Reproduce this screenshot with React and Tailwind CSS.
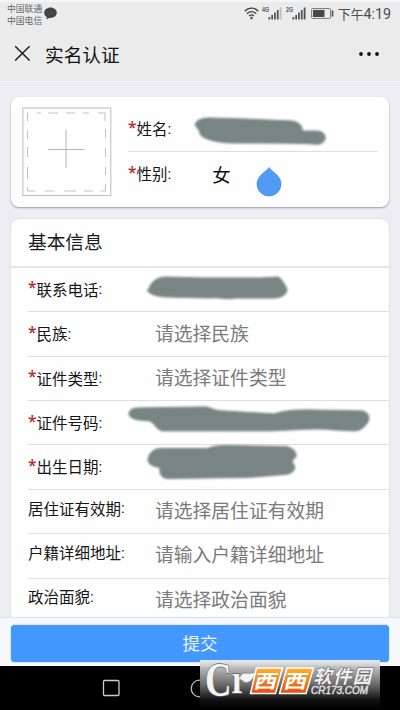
import React from "react";

const BASIC_FIELDS = [
  {
    label: "联系电话",
    required: true,
    strokes: "M149 289 C151 281 158 277 166 277 L202 278 L260 278 L278 277 C282 279 286 286 287 290 C287 295 280 298 274 298 L235 298 C228 300 220 297 210 298 L168 297 C157 297 149 294 147 290 Z",
  },
  { label: "民族", required: true, placeholder: "请选择民族" },
  { label: "证件类型", required: true, placeholder: "请选择证件类型" },
  {
    label: "证件号码",
    required: true,
    strokes: "M129 414 C129 409 134 408 140 408 L206 407 C212 408 215 411 222 411 L274 414 C286 410 298 410 310 410 L362 411 C369 412 370 418 368 422 C364 428 360 431 354 431 L334 430 C318 428 296 430 270 431 L162 431 C157 430 155 424 150 421 L138 420 C133 419 129 417 129 414 Z",
  },
  {
    label: "出生日期",
    required: true,
    strokes: "M148 460 C149 453 154 449 161 449 L208 449 C214 446 220 446 228 446 L286 447 C292 448 297 452 296 457 C294 460 291 461 293 464 C298 469 292 475 284 475 C270 476 255 478 240 478 L168 479 C162 479 159 475 160 468 C153 467 148 465 148 460 Z",
  },
  { label: "居住证有效期", placeholder: "请选择居住证有效期" },
  { label: "户籍详细地址", placeholder: "请输入户籍详细地址" },
  { label: "政治面貌", placeholder: "请选择政治面貌" },
];

function Scribble({ d, top, left }) {
  // path coordinates are in screen units, top/left is the row's own origin
  return (
    <svg
      className="pointer-events-none absolute top-0 left-0 h-[44px] w-[360px] overflow-visible blur-[1px]"
      viewBox={`${left} ${top} 360 44`}
    >
      <path d={d} fill="#788583" stroke="#788583" strokeWidth="1" />
    </svg>
  );
}

function Label({ text, required }) {
  return (
    <span className="flex items-center font-['Noto_Sans_CJK_SC',sans-serif] text-[15.5px] leading-none whitespace-nowrap text-[#151515]">
      {required && (
        <span className="w-[8.5px] pb-[3px] font-['Open_Sans'] text-[15.5px] font-semibold leading-none text-[#b5292b]">
          *
        </span>
      )}
      {text}
      <span className="pt-[1px] font-['Roboto']">:</span>
    </span>
  );
}

function Signal({ name, faded }) {
  return (
    <svg className="h-[14px] w-[20px]" viewBox="0 0 20 14">
      <text x="0" y="6" fontSize="6.5" fontWeight="700" fontFamily="Liberation Sans" fill="#555" textLength="7" lengthAdjust="spacingAndGlyphs">
        {name}
      </text>
      <g fill="#505050">
        <rect x="6.5" y="11" width="1.7" height="2.5" />
        <rect x="9.3" y="9" width="1.7" height="4.5" />
        <rect x="12.1" y="6.5" width="1.7" height="7" />
        <rect x="14.9" y="4" width="1.7" height="9.5" />
        <rect x="17.7" y="1.5" width="1.8" height="12" fill={faded ? "#bdbdbd" : "#505050"} />
      </g>
    </svg>
  );
}

function StatusBar() {
  return (
    <div className="flex h-[28px] items-start pl-[7px] text-[#666]">
      <div className="pt-[1px] text-[8.8px] leading-[12px]">
        <div>中国联通</div>
        <div>中国电信</div>
      </div>
      <svg className="mt-[5px] ml-[2px] h-[13px] w-[13px]" viewBox="0 0 13 13">
        <path d="M6.5 .5C3 .5.2 2.8.2 5.8c0 1.8 1 3.3 2.5 4.2L2.5 12.5 5 10.9c.5.1 1 .1 1.5.1 3.5 0 6.3-2.3 6.3-5.2S10 .5 6.5.5Z" fill="#444" />
      </svg>
      <div className="ml-auto flex items-start pr-[9px]">
        <svg className="mt-[5px] h-[13px] w-[15px]" viewBox="0 0 15 13" fill="none" stroke="#444" strokeWidth="1.3">
          <path d="M.7 4.3C4.5.1 10.5.1 14.3 4.3M2.9 6.7c2.7-2.9 6.5-2.9 9.2 0M5.1 9c1.4-1.5 3.4-1.5 4.8 0" />
          <circle cx="7.5" cy="11" r="1.2" fill="#444" stroke="none" />
        </svg>
        <div className="mt-[4px] ml-[3px] flex gap-[4px]">
          <Signal name="4G" faded />
          <Signal name="2G" />
        </div>
        <svg className="mt-[6px] ml-[5px] h-[11px] w-[23px]" viewBox="0 0 23 11">
          <rect x=".6" y=".6" width="19" height="9.8" rx="1" fill="none" stroke="#777" />
          <rect x="2" y="2" width="11.5" height="7" fill="#484848" />
          <rect x="20.7" y="2.5" width="1.7" height="6" fill="#555" />
        </svg>
        <span className="mt-[4px] ml-[4px] flex items-baseline leading-[16px] whitespace-nowrap text-[#4c4c4c]">
          <span className="text-[12.8px]">下午</span>
          <span className="font-['Roboto'] text-[14.3px]">4:19</span>
        </span>
      </div>
    </div>
  );
}

function TitleBar() {
  return (
    <div className="flex h-[53px] items-start pt-[12px] pl-[14px]">
      <svg className="mt-[3px] h-[17px] w-[17px]" viewBox="0 0 17 17" stroke="#181818" strokeWidth="1.4">
        <path d="M1.2 1.2 15.6 15.6M15.6 1.2 1.2 15.6" />
      </svg>
      <h1 className="ml-[14px] text-[18.7px] leading-[23px] text-[#111]">实名认证</h1>
      <svg className="mt-[10px] mr-[20px] ml-auto h-[4px] w-[21px]" viewBox="0 0 21 4" fill="#111">
        <circle cx="2" cy="2" r="1.9" />
        <circle cx="10" cy="2" r="1.9" />
        <circle cx="18" cy="2" r="1.9" />
      </svg>
    </div>
  );
}

function ProfileCard() {
  return (
    <section className="flex h-[110px] rounded-[8px] bg-[#fefefe] pt-[10px] pl-[11px] shadow-[0_1px_2px_#9a9a9f]">
      <svg className="h-[90px] w-[90px] shrink-0" viewBox="0 0 90 90" fill="none" stroke="#c3c3c3">
        <rect x=".8" y="1" width="88" height="87.5" stroke="#bebebe" />
        <path d="M5.5 14V6h1M15 6h4M26 6h10M44 6h9M61 6h6M76 6h7v8M83.5 22v9M83.5 41v9M83.5 60v8M83.5 77v7h-5M71 84h-9M54 84H42M32 84h-9M13 84H5.5v-4M5.5 72V60M5.5 50V40M5.5 32v-9" />
        <path d="M26.5 42.5h36M44 23v38" stroke="#b5b5b5" />
      </svg>
      <div className="mr-[11px] ml-[16px] flex-1">
        <div className="relative flex h-[45px] items-center border-b border-[#dedede]">
          <Label text="姓名" required />
          <Scribble
            top={107}
            left={128}
            d="M195 125 C196 120 202 118 210 118 L245 119 L292 121 C299 122 303 126 302 131 L316 131 C323 131 326 135 325 139 C324 143 320 145 314 144 C292 143 266 143 235 143 C222 143 211 141 203 137 C199 135 200 130 198 129 Z"
          />
        </div>
        <div className="flex h-[44px] items-center">
          <Label text="性别" required />
          <span className="ml-[41px] text-[18.5px] leading-none text-[#111]">女</span>
          <svg className="mt-[14px] ml-[25px] h-[31px] w-[26px]" viewBox="0 0 26 31">
            <path d="M13 1.5C16 6 25 9.5 25 18a12 12 0 0 1-24 0C1 9.5 10 6 13 1.5Z" fill="#529bf5" stroke="#4688db" strokeWidth=".7" />
          </svg>
        </div>
      </div>
    </section>
  );
}

function BasicInfoCard() {
  return (
    <section className="mt-[12px] rounded-t-[8px] bg-[#fefefe] shadow-[0_0_2px_#c4c4ca]">
      <h2 className="flex h-[49px] items-center border-b-2 border-[#e6e6e6] pb-[2px] pl-[17px] text-[18.7px] leading-none text-[#1a1a1a]">
        基本信息
      </h2>
      {BASIC_FIELDS.map((f, i) => (
        <div
          key={f.label}
          className="relative ml-[17px] flex h-[44.37px] items-center border-b border-[#dfdfdf]"
        >
          <div className={f.required ? "w-[127px]" : "w-[127px] pb-[6px]"}>
            <Label text={f.label} required={f.required} />
          </div>
          {f.placeholder && (
            <span className="pb-[2px] text-[18.8px] leading-none whitespace-nowrap text-[#7a7a7a]">
              {f.placeholder}
            </span>
          )}
          {f.strokes && <Scribble d={f.strokes} left={28} top={268 + i * 44.37} />}
        </div>
      ))}
    </section>
  );
}

function Watermark() {
  return (
    <svg className="absolute right-[20px] bottom-0 h-[50px] w-[180px] overflow-visible" viewBox="0 0 180 50">
      <defs>
        <linearGradient id="fade" x1="0" y1="0" x2="0" y2="1">
          <stop offset="0" stopColor="#e6eaee" />
          <stop offset=".1" stopColor="#d0d3d5" />
          <stop offset=".16" stopColor="#b8b8b8" />
          <stop offset=".5" stopColor="#686868" />
          <stop offset=".8" stopColor="#101010" />
          <stop offset="1" stopColor="#000" />
        </linearGradient>
        <linearGradient id="orange" x1="0" y1="0" x2="0" y2="1">
          <stop offset="0" stopColor="#ffb32a" />
          <stop offset="1" stopColor="#ea4a10" />
        </linearGradient>
      </defs>
      <rect width="180" height="50" fill="url(#fade)" />
      <g fontFamily="Liberation Serif, serif" fontWeight="700" fill="#f3f3f3" stroke="#666" strokeWidth="1.4" paintOrder="stroke">
        <text x="5" y="35.5" fontSize="49" textLength="26.5" lengthAdjust="spacingAndGlyphs">C</text>
        <text x="31.5" y="32.5" fontSize="41" textLength="15" lengthAdjust="spacingAndGlyphs">r</text>
      </g>
      <path d="M40 17c2-4 5-4 8-3.500 3 0 5-.5 7.500-1C54 17 51 22.500 46 22.500c-3 0-3-3-6-3Z" fill="#f4f4f4" stroke="#888" strokeWidth=".5" />
      <g fill="url(#orange)" stroke="#fff" strokeWidth="1.5">
        <path d="M56.5 8h26L75.5 33.5h-25Z" />
        <path d="M87 8h26.5L106 33.5H79.5Z" />
      </g>
      <g fontFamily="Noto Sans CJK SC, sans-serif" fontWeight="700" fill="#fff">
        <g transform="skewX(-14)">
          <text x="60" y="28" fontSize="19" textLength="23" lengthAdjust="spacingAndGlyphs">西</text>
          <text x="90" y="28" fontSize="19" textLength="23" lengthAdjust="spacingAndGlyphs">西</text>
          <text x="119" y="23" fontSize="18.5" textLength="58" fill="#eee" stroke="#666" strokeWidth="1.2" paintOrder="stroke">软件园</text>
        </g>
        <text x="111" y="34" fontSize="10" fontWeight="400" fontFamily="Liberation Sans, sans-serif" fontStyle="italic" fill="#e4e4e4" textLength="57" lengthAdjust="spacingAndGlyphs" stroke="#e4e4e4" strokeWidth=".4">
          CR173.COM
        </text>
      </g>
    </svg>
  );
}

export default function App() {
  return (
    <div className="relative flex h-[710px] w-[400px] flex-col overflow-hidden bg-[#eeedf3] font-['Noto_Sans_CJK_SC',sans-serif]">
      <header className="h-[82px] shrink-0 border-t-2 border-b border-[#f5f5f5] bg-[#ebebeb]">
        <StatusBar />
        <TitleBar />
      </header>

      <main className="min-h-0 flex-1 overflow-hidden px-[11px] pt-[15px]">
        <ProfileCard />
        <BasicInfoCard />
      </main>

      <footer className="h-[49px] shrink-0 border-t border-[#e2e2e4] bg-[#f6f8f9] px-[11px] pt-[7px]">
        <button
          type="button"
          className="flex h-[37px] w-full items-center justify-center rounded-[4px] bg-[#4398ff] pb-[2px] text-[17.5px] leading-none text-[#eaf6ff] shadow-[0_0_1px_#2d74c8]"
        >
          提交
        </button>
      </footer>

      <nav className="flex h-[44px] shrink-0 items-start bg-black pt-[13px] pl-[102px]">
        <svg className="h-[18px] w-[18px]" viewBox="0 0 18 18" fill="none" stroke="#ccc" strokeWidth="1.3">
          <rect x="1.5" y="1.5" width="15.5" height="15" rx="1" />
        </svg>
        <svg className="ml-[70px] h-[19px] w-[19px]" viewBox="0 0 19 19" fill="none" stroke="#bbb" strokeWidth="1.3">
          <circle cx="9.5" cy="9.5" r="8.3" />
        </svg>
      </nav>

      <Watermark />
    </div>
  );
}
